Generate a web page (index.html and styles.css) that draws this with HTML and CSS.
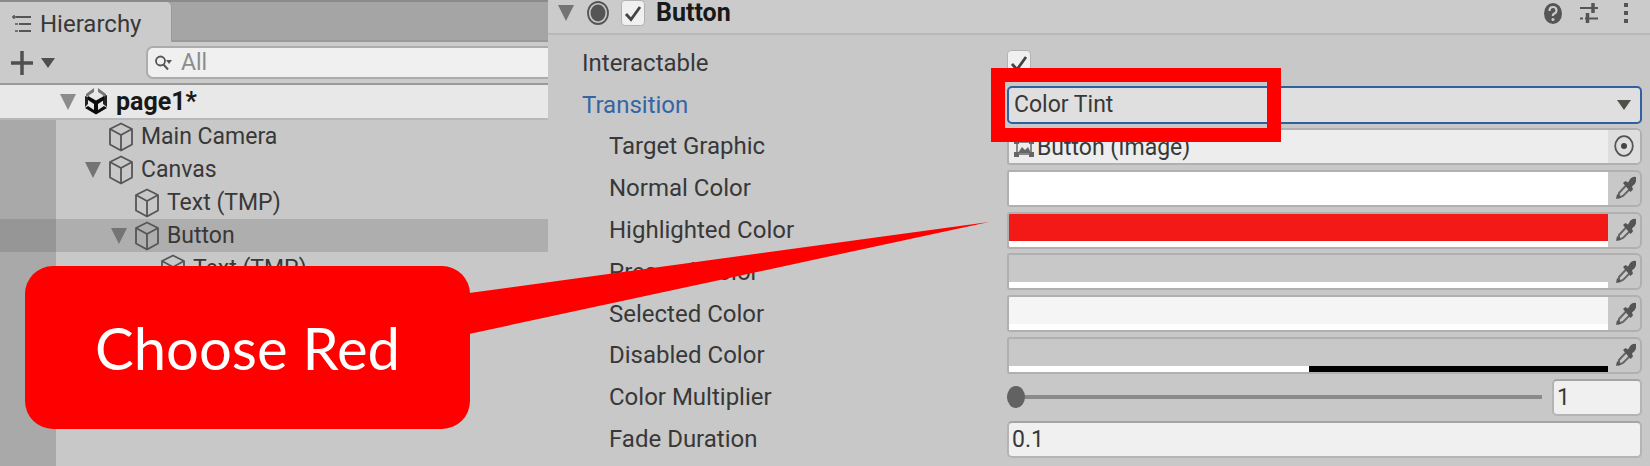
FILE: index.html
```html
<!DOCTYPE html>
<html lang="en">
<head>
<meta charset="utf-8">
<title>Hierarchy and Button inspector</title>
<link rel="stylesheet" href="styles.css">
</head>
<body>
<svg class="defs" aria-hidden="true">
  <symbol id="cube" viewBox="0 0 24 30"><path d="M12 1.500 23 7v15.500L12 28.500 1 22.500V7zM1 7l11 6 11-6M12 13v15.500" fill="none" stroke="#555" stroke-width="1.800" stroke-linejoin="round"/></symbol>
  <symbol id="tri" viewBox="0 0 16 16"><path d="M0 0h16L8 16z" fill="currentColor"/></symbol>
  <symbol id="check" viewBox="0 0 24 26"><path d="M5 14l5 5.500L19 7" fill="none" stroke="#444" stroke-width="2.800"/></symbol>
  <symbol id="dropper" viewBox="0 0 20 24"><path d="M3 17 10.500 9l3.500 4-7 7-4 1.500z" fill="none" stroke="#666" stroke-width="2"/><path d="M0 23l1-5 4 3.500z" fill="#555"/><path d="M7 7l2.500-2L12 6.500 14.500 2.500Q17 0 20 1v4.500q-.5 2.500-4 5l1 3-2.500 2.500z" fill="#555"/></symbol>
</svg>
<main class="app">
  <section class="hierarchy">
    <header class="tabs">
      <h2 class="tab">
        <svg class="tab-icon" viewBox="0 0 20 18"><path d="M4 2h15M7 9h12M7 16h12" stroke="#555" stroke-width="2"/><path d="M0 2h4M2 0v4M3 9h3M3 16h3" stroke="#555" stroke-width="1.500"/></svg>
        Hierarchy
      </h2>
    </header>
    <div class="toolbar">
      <button class="add" aria-label="Add object">
        <svg class="plus" viewBox="0 0 22 24"><path d="M11 0v24M0 12h22" stroke="#505050" stroke-width="3.500"/></svg>
        <svg class="caret" viewBox="0 0 14 10"><path d="M0 0h14L7 10z" fill="#50504a"/></svg>
      </button>
      <label class="search">
        <svg class="search-icon" viewBox="0 0 18 16"><circle cx="5.500" cy="6" r="4.500" fill="none" stroke="#555" stroke-width="1.800"/><path d="M8.500 9.500l4.500 5" stroke="#555" stroke-width="2"/><path d="M11 5h6l-3 4z" fill="#555"/></svg>
        <input class="search-input" type="search" placeholder="All" aria-label="Search hierarchy">
      </label>
    </div>
    <div class="scene">
      <svg class="tri light"><use href="#tri"/></svg>
      <svg class="unity" viewBox="0 0 22 27"><path d="M9 0v4L5 6.500l-2 2L1 8V6zM13 0v4l4 2.500 2 2 2-.500V6z" fill="#777"/><path d="M0 8l3 1v7l-3 3zM22 7v12l-4-3V9z" fill="#222"/><path d="M3 8l8 4.500L19 8v4l-6 4v6l6-4 3 2-11 6.500L0 20l3-2 6 4v-6l-6-4z" fill="#0c0c0c"/></svg>
      <span>page1*</span>
    </div>
    <ul class="tree">
      <li class="node"><span class="gutter"></span><span class="item level-1"><svg class="cube"><use href="#cube"/></svg>Main Camera</span></li>
      <li class="node"><span class="gutter"></span><span class="item level-1 open"><svg class="tri"><use href="#tri"/></svg><svg class="cube"><use href="#cube"/></svg>Canvas</span></li>
      <li class="node"><span class="gutter"></span><span class="item level-2"><svg class="cube"><use href="#cube"/></svg>Text (TMP)</span></li>
      <li class="node selected"><span class="gutter"></span><span class="item level-2 open"><svg class="tri"><use href="#tri"/></svg><svg class="cube"><use href="#cube"/></svg>Button</span></li>
      <li class="node last"><span class="gutter"></span><span class="item level-3"><svg class="cube"><use href="#cube"/></svg>Text (TMP)</span></li>
    </ul>
  </section>

  <section class="inspector">
    <header class="component">
      <svg class="tri"><use href="#tri"/></svg>
      <svg class="radio-icon" viewBox="0 0 22 24"><ellipse cx="11" cy="12" rx="10" ry="11" fill="none" stroke="#555" stroke-width="1.800"/><ellipse cx="11" cy="12" rx="7.500" ry="8.500" fill="#555"/></svg>
      <span class="box"><input class="check" type="checkbox" checked aria-label="Enable Button"><svg class="mark"><use href="#check"/></svg></span>
      <h2 class="title">Button</h2>
      <div class="actions">
        <button class="action" aria-label="Help"><svg class="help" viewBox="0 0 18 21"><ellipse cx="9" cy="10.500" rx="9" ry="10.500" fill="#555"/><path d="M5.500 8q0-4 3.500-4t3.500 3.500q0 2-2 3T9 13" fill="none" stroke="#ccc" stroke-width="2.200"/><circle cx="9" cy="16.500" r="1.500" fill="#ccc"/></svg></button>
        <button class="action" aria-label="Presets"><svg class="preset" viewBox="0 0 18 20"><path d="M0 5h18M0 15.500h3M5 15.500h13" stroke="#555" stroke-width="2"/><path d="M13 0v10M7.500 10v10" stroke="#555" stroke-width="3.500"/></svg></button>
        <button class="action" aria-label="More"><svg class="more" viewBox="0 0 4 22"><path d="M0 1h4v4H0zM0 9h4v4H0zM0 17h4v4H0z" fill="#555"/></svg></button>
      </div>
    </header>
    <div class="props">
      <div class="row">
        <label class="label" for="interactable">Interactable</label>
        <span class="box"><input class="check" type="checkbox" id="interactable" checked><svg class="mark"><use href="#check"/></svg></span>
      </div>
      <div class="row">
        <label class="label active" for="transition">Transition</label>
        <div class="select-wrap">
          <select class="select" id="transition"><option>Color Tint</option></select>
          <svg class="select-caret" viewBox="0 0 14 10"><path d="M0 0h14L7 10z" fill="#50504a"/></svg>
          <span class="frame"></span>
        </div>
      </div>
      <div class="row">
        <span class="label sub">Target Graphic</span>
        <div class="field object">
          <span class="object-value"><svg class="image-icon" viewBox="0 0 20 18"><path d="M3 3h14v12H3z" fill="none" stroke="#666" stroke-width="1.500"/><path d="M0 0h5v5H0zM15 0h5v5h-5zM0 13h5v5H0zM15 13h5v5h-5zM4 14l4-6 3 3 3-3 3 6z" fill="#666"/></svg>Button (Image)</span>
          <button class="picker light" aria-label="Select target graphic"><svg class="target" viewBox="0 0 20 22"><ellipse cx="10" cy="11" rx="8.800" ry="9.800" fill="none" stroke="#555" stroke-width="1.800"/><circle cx="10" cy="11" r="3" fill="#444"/></svg></button>
        </div>
      </div>
      <div class="row">
        <span class="label sub">Normal Color</span>
        <div class="field"><button class="swatch white" aria-label="Normal Color"><span class="alpha"></span></button><button class="picker" aria-label="Pick normal color"><svg class="dropper"><use href="#dropper"/></svg></button></div>
      </div>
      <div class="row">
        <span class="label sub">Highlighted Color</span>
        <div class="field"><button class="swatch red" aria-label="Highlighted Color"><span class="alpha"></span></button><button class="picker" aria-label="Pick highlighted color"><svg class="dropper"><use href="#dropper"/></svg></button></div>
      </div>
      <div class="row">
        <span class="label sub">Pressed Color</span>
        <div class="field"><button class="swatch gray" aria-label="Pressed Color"><span class="alpha"></span></button><button class="picker" aria-label="Pick pressed color"><svg class="dropper"><use href="#dropper"/></svg></button></div>
      </div>
      <div class="row">
        <span class="label sub">Selected Color</span>
        <div class="field"><button class="swatch pale" aria-label="Selected Color"><span class="alpha"></span></button><button class="picker" aria-label="Pick selected color"><svg class="dropper"><use href="#dropper"/></svg></button></div>
      </div>
      <div class="row">
        <span class="label sub">Disabled Color</span>
        <div class="field"><button class="swatch gray" aria-label="Disabled Color"><span class="alpha half"></span></button><button class="picker" aria-label="Pick disabled color"><svg class="dropper"><use href="#dropper"/></svg></button></div>
      </div>
      <div class="row">
        <label class="label sub" for="multiplier">Color Multiplier</label>
        <div class="slider">
          <input class="range" id="multiplier" type="range" min="1" max="5" value="1">
          <input class="text short" type="text" value="1" aria-label="Color Multiplier value">
        </div>
      </div>
      <div class="row">
        <label class="label sub" for="fade">Fade Duration</label>
        <input class="text" id="fade" type="text" value="0.1">
      </div>
    </div>
  </section>

  <aside class="callout">
    Choose Red
    <svg class="tail" viewBox="0 0 520 112"><path d="M0 71 520 0 0 112z" fill="#f00"/></svg>
  </aside>
</main>
</body>
</html>
```

FILE: styles.css
```css
* { box-sizing: border-box; }

body {
  margin: 0;
  background: #c8c8c8;
  color: #383838;
  font: 23px/32px Roboto, "Liberation Sans", sans-serif;
}

h2, ul { margin: 0; padding: 0; }
button { padding: 0; border: 0; background: none; font: inherit; }
input, select { font: inherit; color: inherit; }
svg { display: block; flex: none; }
.defs { position: absolute; width: 0; height: 0; }

.app {
  position: relative;
  display: grid;
  grid-template-columns: 548fr 1102fr;
  min-height: 100vh;
  overflow: hidden;
}

/* Hierarchy */
.hierarchy { display: flex; flex-direction: column; min-width: 0; }
.tabs {
  display: flex;
  height: 42px;
  background: #a5a5a5;
  border-top: 2px solid #8a8a8a;
  box-shadow: inset 0 -2px #999;
}
.tab {
  display: flex;
  align-items: center;
  gap: 8px;
  width: 172px;
  height: 40px;
  padding: 3px 0 0 12px;
  border-right: 1px solid #999;
  border-radius: 0 5px 0 0;
  background: #cbcbcb;
  font-size: 24px;
  font-weight: 400;
}
.tab-icon { width: 20px; height: 18px; }
.toolbar {
  display: flex;
  align-items: center;
  height: 43px;
  background: #cbcbcb;
  border-bottom: 2px solid #999;
}
.add { display: flex; align-items: center; gap: 8px; width: 146px; padding-left: 11px; }
.plus { width: 22px; height: 24px; }
.caret { width: 14px; height: 10px; }
.search {
  display: flex;
  flex: 1;
  align-items: center;
  gap: 8px;
  min-width: 0;
  height: 33px;
  padding-left: 7px;
  background: #f0f0f0;
  border: 2px solid #acacac;
  border-right: 0;
  border-radius: 7px 0 0 7px;
}
.search-icon { width: 18px; height: 16px; }
.search-input { flex: 1; min-width: 0; height: 28px; padding: 0; border: 0; background: none; outline: 0; }
.search-input::placeholder { color: #8c8c8c; opacity: 1; }

.scene {
  display: flex;
  align-items: center;
  gap: 9px;
  height: 35px;
  padding-left: 60px;
  background: #e8e8e8;
  border-bottom: 2px solid #b8b8b8;
  color: #181818;
  font-size: 25px;
  font-weight: 700;
}
.tri { width: 16px; height: 16px; color: #747474; }
.tri.light { color: #8c8c8c; }
.unity { width: 22px; height: 27px; }

.tree { display: flex; flex: 1; flex-direction: column; list-style: none; }
.node { display: flex; height: 33px; }
.node.last { flex: 1; }
.gutter { width: 56px; background: #a9a9a9; }
.item { display: flex; flex: 1; align-items: center; gap: 8px; height: 33px; }
.cube { width: 24px; height: 30px; }
.level-1 { padding-left: 53px; }
.level-2 { padding-left: 79px; }
.level-3 { padding-left: 105px; }
.level-1.open { padding-left: 29px; }
.level-2.open { padding-left: 55px; }
.selected { background: #aeaeae; }
.selected .gutter { background: #969696; }

/* Inspector */
.inspector { display: flex; flex-direction: column; min-width: 0; padding-bottom: 6px; }
.component {
  display: flex;
  align-items: center;
  height: 35px;
  padding: 0 22px 7px 10px;
  background: #cbcbcb;
  border-bottom: 2px solid #b9b9b9;
}
.radio-icon { width: 22px; height: 24px; margin: 0 12px 0 13px; }
.title { margin-left: 11px; color: #181818; font-size: 25px; font-weight: 700; line-height: 26px; }
.actions { display: flex; gap: 18px; align-items: center; margin-left: auto; }
.help { width: 18px; height: 21px; }
.preset { width: 18px; height: 20px; }
.more { width: 4px; height: 22px; margin-left: 8px; }

.box { display: grid; width: 24px; height: 26px; }
.check, .mark { grid-area: 1 / 1; width: 24px; height: 26px; }
.check {
  margin: 0;
  appearance: none;
  background: #f0f0f0;
  border: 1px solid #b2b2b2;
  border-radius: 4px;
}
.mark { pointer-events: none; }

.props { display: flex; flex: 1; flex-direction: column; padding-top: 7px; }
.row {
  display: grid;
  flex: 1;
  grid-template-columns: 459fr 635fr;
  align-items: center;
  min-height: 41px;
  padding-right: 8px;
}
.label { padding-left: 34px; font-size: 24px; }
.label.sub { padding-left: 61px; }
.label.active { color: #3565a5; }

.select-wrap { position: relative; display: grid; align-items: center; }
.select {
  grid-area: 1 / 1;
  width: 100%;
  height: 38px;
  padding: 0 5px;
  appearance: none;
  background: #dfdfdf;
  border: 2px solid #2f619f;
  border-radius: 5px;
}
.select-caret { grid-area: 1 / 1; justify-self: end; width: 14px; height: 10px; margin-right: 11px; pointer-events: none; }
.frame {
  position: absolute;
  z-index: 1;
  top: -18px;
  left: -16px;
  width: 290px;
  height: 74px;
  border: 14px solid #f00;
  pointer-events: none;
}

.field {
  display: flex;
  height: 37px;
  overflow: hidden;
  border: 2px solid #b0b0b0;
  border-radius: 3px 6px 6px 3px;
}
.object { background: #ededed; }
.object-value { display: flex; flex: 1; align-items: center; gap: 3px; padding: 3px 0 0 5px; }
.image-icon { width: 20px; height: 18px; }
.picker { display: grid; place-items: center; width: 32px; }
.picker.light { background: #dedede; }
.target { width: 20px; height: 22px; }
.dropper { width: 20px; height: 24px; margin-left: 4px; }
.swatch { display: flex; flex: 1; align-items: flex-end; }
.alpha { width: 100%; height: 6px; background: #fff; }
.alpha.half { background: linear-gradient(90deg, #fff 50%, #000 50%); }
.white { background: #fff; }
.red { background: #f31917; }
.gray { background: #c8c8c8; }
.pale { background: #f5f5f5; }

.text {
  width: 100%;
  height: 37px;
  padding: 0 3px;
  background: #f0f0f0;
  border: 2px solid #b4b4b4;
  border-top-color: #a4a4a4;
  border-radius: 5px;
}
.slider { display: flex; align-items: center; gap: 10px; }
.text.short { width: 90px; }
.range { flex: 1; min-width: 0; height: 22px; margin: 0; appearance: none; background: none; }
.range::-webkit-slider-runnable-track { height: 4px; background: #8a8a8a; }
.range::-webkit-slider-thumb {
  width: 18px;
  height: 22px;
  margin-top: -9px;
  appearance: none;
  background: #626262;
  border-radius: 50%;
}

/* Annotation */
.callout {
  position: absolute;
  z-index: 2;
  top: 266px;
  left: 25px;
  display: grid;
  place-items: center;
  width: 445px;
  height: 163px;
  border-radius: 28px;
  background: #f00;
  color: #fff;
  font: 58px/68px Lato, "Open Sans", sans-serif;
}
.tail { position: absolute; top: -44px; left: 444px; width: 520px; height: 112px; }
```
